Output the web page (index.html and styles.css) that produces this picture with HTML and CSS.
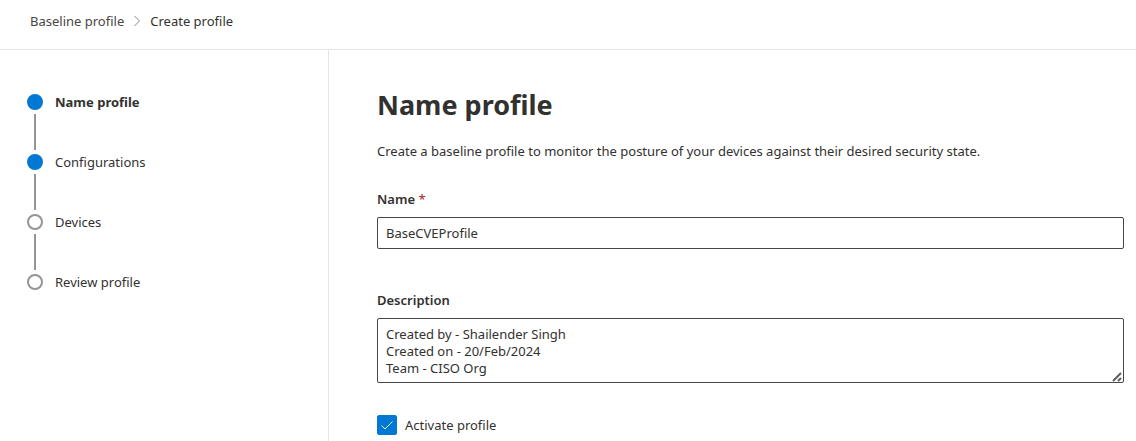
FILE: index.html
```html
<!DOCTYPE html>
<html lang="en">
<head>
<meta charset="utf-8">
<meta name="viewport" content="width=device-width, initial-scale=1">
<title>Create profile</title>
<link rel="stylesheet" href="styles.css">
</head>
<body>
<header class="topbar">
  <nav class="breadcrumb" aria-label="Breadcrumb">
    <a class="crumb" href="#">Baseline profile</a>
    <svg class="crumb-arrow" viewBox="0 0 8 12" aria-hidden="true"><path d="M1.5 1 6.5 6 1.5 11"/></svg>
    <span class="crumb crumb-current" aria-current="page">Create profile</span>
  </nav>
</header>
<div class="wizard">
  <nav class="sidebar" aria-label="Steps">
    <ol class="steps">
      <li class="step step-current" aria-current="step"><span class="dot dot-filled"></span><span>Name profile</span></li>
      <li class="step"><span class="dot dot-filled"></span><span>Configurations</span></li>
      <li class="step"><span class="dot"></span><span>Devices</span></li>
      <li class="step"><span class="dot"></span><span>Review profile</span></li>
    </ol>
  </nav>
  <main class="content">
    <h1 class="title">Name profile</h1>
    <p class="intro">Create a baseline profile to monitor the posture of your devices against their desired security state.</p>
    <form class="form">
      <div class="field">
        <label class="label" for="name">Name <span class="required">*</span></label>
        <input class="control" id="name" type="text" value="BaseCVEProfile" spellcheck="false">
      </div>
      <div class="field">
        <label class="label" for="description">Description</label>
        <div class="area">
          <textarea class="control control-area" id="description" rows="3" spellcheck="false">Created by - Shailender Singh
Created on - 20/Feb/2024
Team - CISO Org</textarea>
          <svg class="grip" viewBox="0 0 10 10" aria-hidden="true"><path d="M1 9 9 1M6 9 9 6"/></svg>
        </div>
      </div>
      <label class="check">
        <span class="check-box">
          <input class="check-input" type="checkbox" checked>
          <svg class="check-mark" viewBox="0 0 20 20" aria-hidden="true"><path d="M4.5 10.5 8 14 15.5 6.5"/></svg>
        </span>
        <span>Activate profile</span>
      </label>
    </form>
  </main>
</div>
</body>
</html>
```

FILE: styles.css
```css
* {
  box-sizing: border-box;
}

body {
  margin: 0;
  min-height: 100vh;
  display: flex;
  flex-direction: column;
  background: #fff;
  color: #323130;
  font: 13px/20px "Noto Sans", sans-serif;
}

.topbar {
  padding: 11px 30px 18px;
  border-bottom: 1px solid #e5e5e5;
}

.breadcrumb {
  display: flex;
  align-items: center;
  gap: 9px;
}

.crumb {
  color: #484644;
  text-decoration: none;
}

.crumb-current {
  color: #323130;
}

.crumb-arrow {
  width: 8px;
  height: 12px;
  fill: none;
  stroke: #8a8886;
}

.wizard {
  flex: 1;
  display: grid;
  grid-template-columns: 329px 1fr;
}

.sidebar {
  padding: 42px 27px;
  border-right: 1px solid #e5e5e5;
}

.steps {
  margin: 0;
  padding: 0;
  list-style: none;
}

.step {
  position: relative;
  display: flex;
  align-items: center;
  gap: 12px;
}

.step + .step {
  margin-top: 40px;
}

.step + .step::before {
  content: "";
  position: absolute;
  left: 7px;
  bottom: 22px;
  width: 2px;
  height: 36px;
  background: #979593;
}

.step-current {
  font-weight: 700;
}

.dot {
  width: 16px;
  height: 16px;
  border: 2px solid #979593;
  border-radius: 50%;
}

.dot-filled {
  border-color: #0078d4;
  background: #0078d4;
}

.content {
  padding: 37px 12px 0 48px;
}

.title {
  margin: 0;
  font-size: 27px;
  line-height: 36px;
  font-weight: 700;
}

.intro {
  margin: 18px 0 28px;
}

.field {
  display: flex;
  flex-direction: column;
  gap: 8px;
  margin-bottom: 41px;
}

.label {
  font-weight: 600;
}

.required {
  color: #a4262c;
  font-weight: 400;
}

.control {
  display: block;
  width: 100%;
  height: 32px;
  padding: 0 8px;
  border: 1px solid #484644;
  border-radius: 2px;
  background: #fff;
  color: #323130;
  font: inherit;
}

.area {
  position: relative;
}

.control-area {
  height: 65px;
  padding: 7px 8px 5px;
  line-height: 17px;
  overflow: hidden;
  resize: vertical;
}

.control-area::-webkit-resizer {
  background: transparent;
}

.grip {
  position: absolute;
  right: 2px;
  bottom: 1px;
  width: 10px;
  height: 10px;
  stroke: #605e5c;
  stroke-width: 2;
  pointer-events: none;
}

.field:last-of-type {
  margin-bottom: 32px;
}

.check {
  display: flex;
  align-items: center;
  gap: 8px;
}

.check-box {
  display: grid;
  width: 20px;
  height: 20px;
}

.check-input,
.check-mark {
  grid-area: 1 / 1;
  width: 20px;
  height: 20px;
}

.check-input {
  appearance: none;
  margin: 0;
  border: 1px solid #323130;
  border-radius: 2px;
}

.check-input:checked {
  border-color: #0078d4;
  background: #0078d4;
}

.check-mark {
  fill: none;
  stroke: #fff;
  pointer-events: none;
}
```
